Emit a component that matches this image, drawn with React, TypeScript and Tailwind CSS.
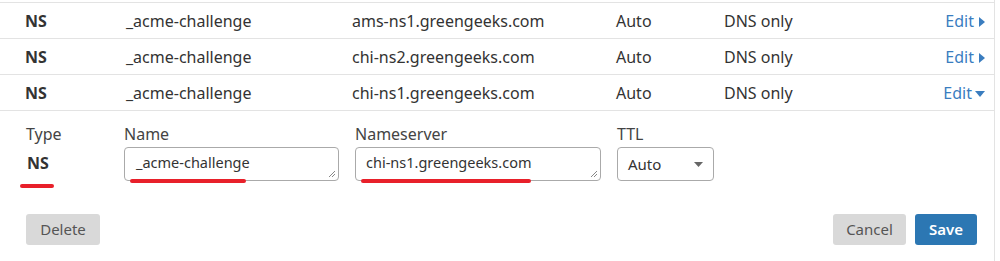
const records = [
  { type: "NS", name: "_acme-challenge", content: "ams-ns1.greengeeks.com", ttl: "Auto", proxy: "DNS only", open: false },
  { type: "NS", name: "_acme-challenge", content: "chi-ns2.greengeeks.com", ttl: "Auto", proxy: "DNS only", open: false },
  { type: "NS", name: "_acme-challenge", content: "chi-ns1.greengeeks.com", ttl: "Auto", proxy: "DNS only", open: true },
];

function Caret({ open }: { open: boolean }) {
  return open ? (
    <svg width="10" height="6" viewBox="0 0 10 6" className="ml-[3px] mt-[2px]">
      <path d="M0 0h10L5 6z" fill="currentColor" />
    </svg>
  ) : (
    <svg width="6" height="10" viewBox="0 0 6 10" className="ml-[5px] mt-[2px]">
      <path d="M0 0v10l6-5z" fill="currentColor" />
    </svg>
  );
}

// little textarea resize grip
function Grip() {
  return (
    <svg width="9" height="9" viewBox="0 0 9 9" className="absolute right-[2px] bottom-[2px]">
      <path d="M8 2L2 8M8 5L5 8" stroke="#888" strokeWidth="1" />
    </svg>
  );
}

export default function App() {
  return (
    <div className="w-[1000px] h-[261px] bg-white overflow-hidden text-[#333] text-[16px]" style={{ fontFamily: '"Noto Sans", "Open Sans", sans-serif' }}>
      <div className="w-[995px] h-full border-r border-[#e3e3e3] pt-[2px]">
        <div className="border-t border-[#e3e3e3]">
          {records.map((r, i) => (
            <div key={i} className="flex items-center h-[36px] border-b border-[#e3e3e3] leading-none">
              <div className="w-[126px] pl-[25px] font-bold">{r.type}</div>
              <div className="w-[226px]">{r.name}</div>
              <div className="w-[264px]">{r.content}</div>
              <div className="w-[108px]">{r.ttl}</div>
              <div className="w-[200px]">{r.proxy}</div>
              <div className="flex-1 flex items-center justify-end pr-[9px] text-[#3a7dbf]">
                Edit
                <Caret open={r.open} />
              </div>
            </div>
          ))}
        </div>

        <div className="relative pt-[10px]">
          <div className="flex items-start">
            <div className="w-[124px] pl-[26px]">
              <div className="h-[26px] leading-[26px] text-[#444]">Type</div>
              <div className="h-[32px] flex items-center font-bold pl-[1px]">NS</div>
            </div>
            <div className="w-[231px]">
              <div className="h-[26px] leading-[26px] text-[#444]">Name</div>
              <div className="relative w-[215px] h-[34px] border border-[#aaa] rounded-[4px] flex items-center px-[11px] pb-[3px] text-[14.5px]">
                _acme-challenge
                <Grip />
              </div>
            </div>
            <div className="w-[262px]">
              <div className="h-[26px] leading-[26px] text-[#444]">Nameserver</div>
              <div className="relative w-[246px] h-[34px] border border-[#aaa] rounded-[4px] flex items-center px-[10px] pb-[3px] text-[14.5px]">
                chi-ns1.greengeeks.com
                <Grip />
              </div>
            </div>
            <div>
              <div className="h-[26px] leading-[26px] text-[#444]">TTL</div>
              <div className="w-[97px] h-[34px] border border-[#aaa] rounded-[4px] flex items-center justify-between pl-[10px] pr-[10px] text-[15px]">
                Auto
                <svg width="9" height="5" viewBox="0 0 9 5"><path d="M0 0h9L4.5 5z" fill="#666" /></svg>
              </div>
            </div>
          </div>

          <div className="flex justify-between items-center mt-[33px] pl-[26px] pr-[17px]">
            <button className="h-[31px] w-[74px] rounded-[3px] bg-[#d9d9d9] text-[#555] text-[15px]">Delete</button>
            <div className="flex gap-[9px]">
              <button className="h-[31px] w-[73px] rounded-[3px] bg-[#d9d9d9] text-[#555] text-[15px]">Cancel</button>
              <button className="h-[31px] w-[62px] rounded-[3px] bg-[#2c77b3] text-white text-[15px] font-semibold">Save</button>
            </div>
          </div>

          <span className="absolute left-[20px] top-[73px] w-[34px] h-[4px] rounded-full bg-[#e8202a]" />
          <span className="absolute left-[130px] top-[68px] w-[116px] h-[4px] rounded-full bg-[#e8202a]" />
          <span className="absolute left-[361px] top-[68px] w-[170px] h-[4px] rounded-full bg-[#e8202a]" />
        </div>
      </div>
    </div>
  );
}
